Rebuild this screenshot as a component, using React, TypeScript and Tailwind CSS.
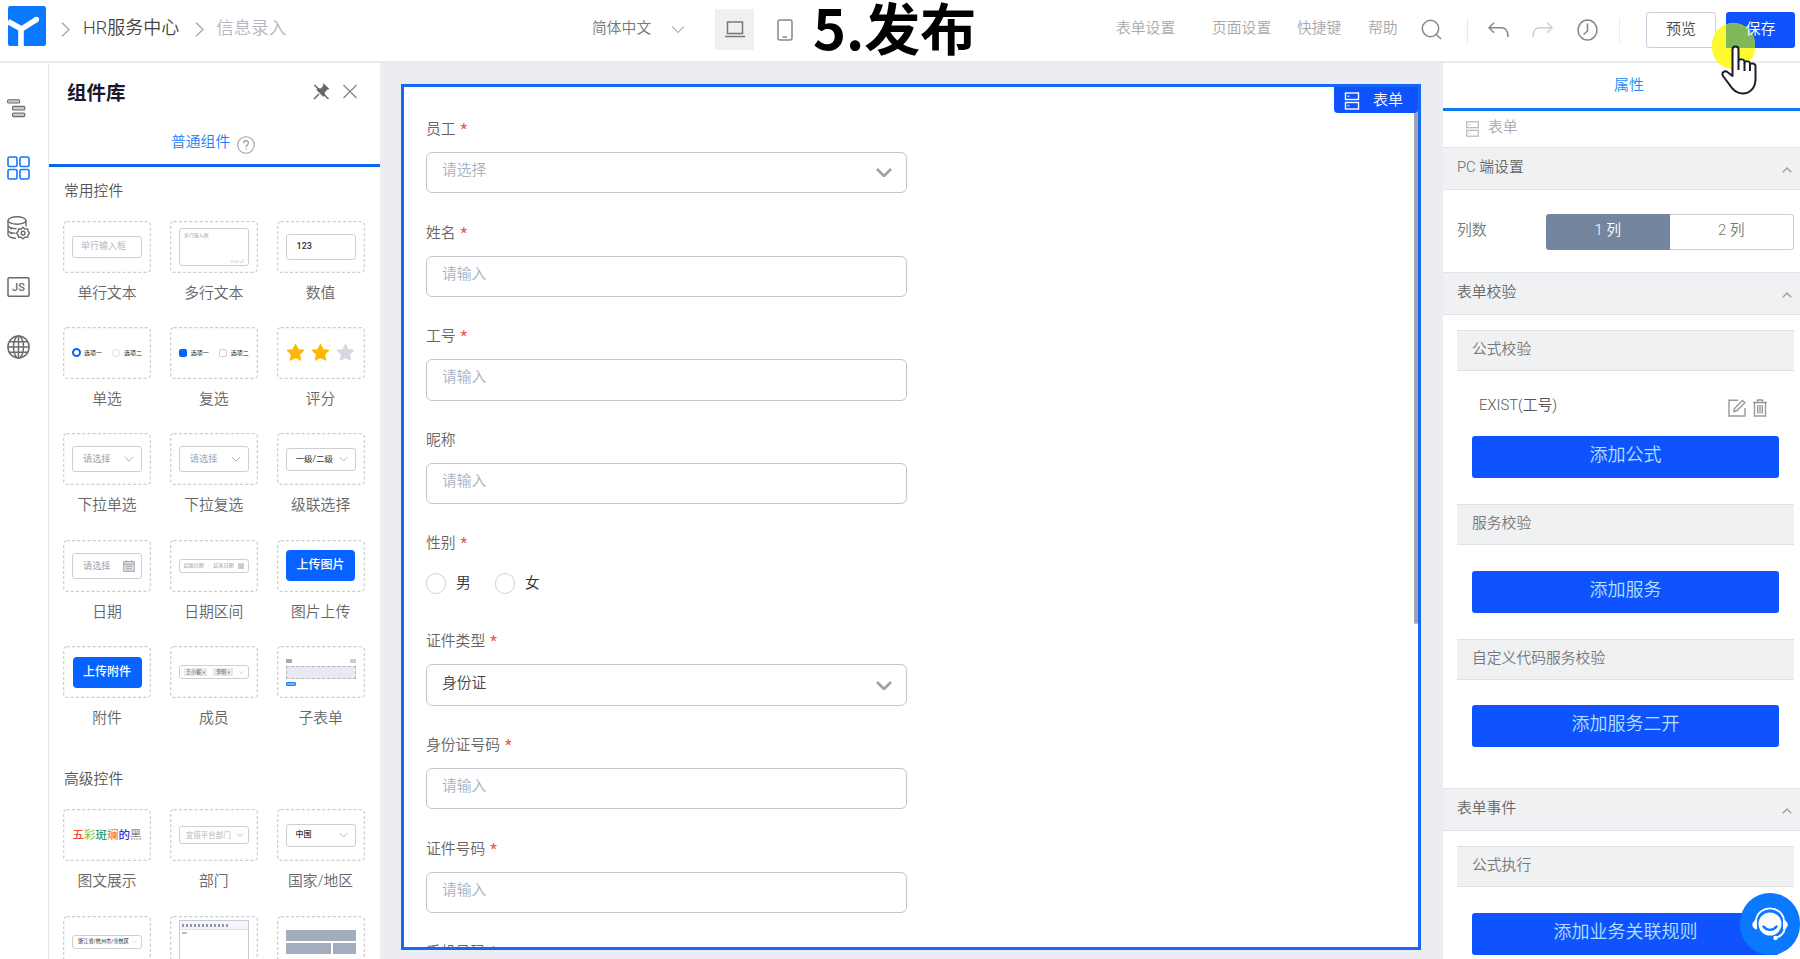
import React from "react";

type Kids = { children?: React.ReactNode };

const Down = ({ className, w = 1.6 }: { className: string; w?: number }) => (
  <svg className={className} viewBox="0 0 16 9" fill="none" stroke="currentColor" strokeWidth={w}>
    <path d="M1 1l7 7 7-7" />
  </svg>
);

const Right = () => (
  <svg className="h-[15px] w-[9px] text-[#a6a6a6]" viewBox="0 0 9 15" fill="none" stroke="currentColor" strokeWidth="1.3">
    <path d="M1 .8l7 6.7-7 6.7" />
  </svg>
);

const FormIcon = ({ className }: { className: string }) => (
  <svg className={className} viewBox="0 0 16 20" fill="none" stroke="currentColor" strokeWidth="1.4">
    <rect x="1.5" y="2" width="13" height="6.5" />
    <rect x="1.5" y="11.5" width="13" height="6.5" />
    <path d="M3.5 5.2h2M3.5 14.7h2" strokeWidth="1" />
  </svg>
);

function Header() {
  return (
    <header className="flex h-[63px] shrink-0 items-start border-b-2 border-[#ebebef] bg-white">
      <div className="flex h-[48px] w-[592px] items-center pl-2">
        <svg className="mt-1 h-[40px] w-[38px]" viewBox="0 0 38 40">
          <rect width="38" height="40" rx="2.5" fill="#0a78ff" />
          <path d="M0 15.5l13.5 7.5L28.5 13.5M13 22v18" stroke="#fff" strokeWidth="5.6" fill="none" />
          <circle cx="28.3" cy="13.6" r="2.8" fill="#fff" />
        </svg>
        <div className="mt-[10px] ml-[15px]"><Right /></div>
        <span className="mt-[7px] ml-[13px] text-[18px] leading-6 text-[#444]">HR服务中心</span>
        <div className="mt-[10px] ml-4"><Right /></div>
        <span className="mt-[7px] ml-[12px] text-[17.5px] leading-6 text-[#b3b6c2]">信息录入</span>
      </div>
      <div className="flex w-[524px] items-start">
        <span className="mt-4 w-[59px] text-[14.8px] leading-6 whitespace-nowrap text-[#777]">简体中文</span>
        <Down className="mt-[25px] ml-5 h-[9px] w-[14px] text-[#aaa]" w={1.2} />
        <div className="mt-[9px] ml-[30px] flex h-[41px] w-[39px] items-center justify-center bg-[#f0f0f0]">
          <svg className="h-[17px] w-[20px]" viewBox="0 0 20 17" fill="none" stroke="#777" strokeWidth="1.5">
            <path d="M2.5 1h15v11.5h-15zM0 15.5h20" />
          </svg>
        </div>
        <svg className="mt-[19px] ml-[23px] h-[22px] w-[16px]" viewBox="0 0 16 22" fill="none" stroke="#888" strokeWidth="1.5">
          <rect x="1" y="1" width="14" height="20" rx="2" />
          <path d="M5.5 18h4.5" />
        </svg>
        <span className="-mt-[4px] ml-[20px] text-[56px] leading-[60px] font-bold whitespace-nowrap text-black [font-family:'Noto_Sans_CJK_SC',sans-serif]">5.发布</span>
      </div>
      <nav className="flex items-start text-[14.8px] leading-6 whitespace-nowrap text-[#a9a9a9]">
        <span className="mt-4 w-[96px]">表单设置</span>
        <span className="mt-4 w-[85px]">页面设置</span>
        <span className="mt-4 w-[71px]">快捷键</span>
        <span className="mt-4 w-[53px]">帮助</span>
        <svg className="mt-[19px] h-[21px] w-[21px]" viewBox="0 0 21 21" fill="none" stroke="#888" strokeWidth="1.5">
          <circle cx="9.5" cy="9.5" r="8.2" />
          <path d="M15.3 15.5l4.7 4.5" />
        </svg>
        <div className="mt-[18px] ml-[25px] h-[26px] w-px bg-[#e8e8e8]" />
        <svg className="mt-[22px] ml-[20px] h-[16px] w-[21px]" viewBox="0 0 21 16" fill="none" stroke="#888" strokeWidth="1.5">
          <path d="M6 .8L1 5.8l5 5M1 5.8h12c4.500 0 7 3 7 9.200" />
        </svg>
        <svg className="mt-[22px] ml-[23px] h-[16px] w-[21px]" viewBox="0 0 21 16" fill="none" stroke="#cfcfcf" strokeWidth="1.5">
          <path d="M15 .8l5 5-5 5M20 5.800H8C3.500 5.800 1 8.800 1 15" />
        </svg>
        <svg className="mt-[19px] ml-[24px] h-[22px] w-[21px]" viewBox="0 0 21 22" fill="none" stroke="#888" strokeWidth="1.6">
          <ellipse cx="10.500" cy="11" rx="9.500" ry="10" />
          <path d="M10.500 4.500v7.500l-4 3.500" />
        </svg>
        <div className="mt-[18px] ml-[21px] h-[26px] w-px bg-[#ececec]" />
        <div className="mt-[12px] ml-[26px] flex h-[36px] w-[70px] justify-center rounded-[3px] border border-[#cfcbdc] pt-1 text-[15px] text-[#4a4a4a]">预览</div>
        <div className="relative mt-[12px] ml-[10px] flex h-[36px] w-[69px] justify-center rounded-[3px] bg-[#0f53ff] pt-[5px] text-[15px] text-white">
          <div className="absolute top-[11px] -left-[14px] h-[46px] w-[43px] overflow-hidden rounded-full bg-[#fff930]">
            <div className="ml-[14px] h-[25px] bg-[#7fb75a]" />
          </div>
          <span className="relative">保存</span>
        </div>
      </nav>
    </header>
  );
}

function Rail() {
  return (
    <aside className="flex w-[49px] shrink-0 flex-col border-r border-[#e9e9ec] bg-white pl-[7px] text-[#6b6b6b]">
      <svg className="mt-[36px] h-[19px] w-[19px]" viewBox="0 0 19 19" fill="#c9c9c9" stroke="currentColor" strokeWidth="1.1">
        <rect x=".6" y=".8" width="12" height="3.200" rx="1" />
        <rect x="5.500" y="7.400" width="12.300" height="3.600" rx="1" />
        <rect x="5.500" y="14" width="12.300" height="3.600" rx="1" />
      </svg>
      <svg className="mt-[38px] h-[24px] w-[23px]" viewBox="0 0 23 24" fill="none" stroke="#1677ff" strokeWidth="1.600">
        <rect x="1" y="1" width="9" height="9.500" rx="1.500" />
        <rect x="13" y="1" width="9" height="9.500" rx="1.500" />
        <rect x="1" y="13.500" width="9" height="9.500" rx="1.500" />
        <rect x="13" y="13.500" width="9" height="9.500" rx="1.500" />
      </svg>
      <svg className="mt-[36px] h-[24px] w-[23px]" viewBox="0 0 23 24" fill="none" stroke="currentColor" strokeWidth="1.400">
        <ellipse cx="10" cy="4.500" rx="9" ry="3.700" />
        <path d="M1 4.500v14c0 2 3.500 3.700 8 3.900M19 4.500v6M1 9.200c0 1.800 3.500 3.400 8.500 3.500M1 13.800c0 1.800 3 3.400 7.500 3.600M4 12v1.500M4 16.800v1.500" />
        <path d="M16 11.300l2 1.800 2.700-.2.500 2.500 1.300 1.800-1.400 2-.5 2.200-2.600-.1-2 1.600-1.900-1.700-2.500 0-.6-2.200-1.300-2 1.400-1.800.5-2.300 2.600.1z" />
        <circle cx="16.100" cy="17.100" r="1.900" />
      </svg>
      <svg className="mt-[37px] h-[20px] w-[23px]" viewBox="0 0 23 20" fill="none" stroke="currentColor" strokeWidth="1.500">
        <rect x="1" y=".8" width="21" height="18.400" rx="1" />
        <text x="11.500" y="14" textAnchor="middle" fontSize="11" fontFamily="Roboto" fill="currentColor" stroke="none" fontWeight="500">JS</text>
      </svg>
      <svg className="mt-[38px] h-[24px] w-[23px]" viewBox="0 0 23 24" fill="none" stroke="currentColor" strokeWidth="1.500">
        <ellipse cx="11.500" cy="12" rx="10.600" ry="11" />
        <ellipse cx="11.500" cy="12" rx="5" ry="11" />
        <path d="M11.500 1v22M1 12h21M2.500 6.700h18M2.500 17.300h18" />
      </svg>
    </aside>
  );
}

const Box = ({ h, children }: Kids & { h: string }) => (
  <div className={"flex w-[70px] items-center rounded-[3px] border border-[#cfcfd2] " + h}>{children}</div>
);

const Star = ({ color }: { color: string }) => (
  <svg className="h-[19px] w-[19px]" viewBox="0 0 24 24" fill={color} stroke={color} strokeWidth="1.500" strokeLinejoin="round">
    <path d="M12 1.800l3.200 6.600 7.100 1-5.200 5 1.300 7.200L12 18.200l-6.400 3.400 1.300-7.200-5.200-5 7.100-1z" />
  </svg>
);

const Cal = ({ className }: { className: string }) => (
  <svg className={className} viewBox="0 0 12 12" fill="#dcdde2" stroke="#a8abb5" strokeWidth="1">
    <path d="M.6 1.600h10.800v9.800H.6zM.6 4.300h10.800M3.400 0v2.500M8.600 0v2.500M3 6.500h6M3 8.800h6" />
  </svg>
);

const Pick = () => (
  <Box h="h-[26px] justify-between pl-[10px] pr-[7px]">
    <span className="text-[9.200px] font-normal text-[#9aa1b0]">请选择</span>
    <Down className="h-[6px] w-[10px] text-[#b0b0b0]" />
  </Box>
);

const Upload = ({ children }: Kids) => (
  <div className="flex h-[31px] w-[69px] items-center justify-center rounded-[4px] bg-[#0763ff] pb-px text-[12px] font-medium text-white">{children}</div>
);

const thumbs: [string, React.ReactNode][] = [
  ["单行文本", <Box h="h-[22px] pl-2"><span className="text-[9px] font-normal text-[#b4bac6]">单行输入框</span></Box>],
  ["多行文本",
    <Box h="h-[38px] flex-col justify-between">
      <span className="w-full pt-[3px] pl-1 text-[5px] leading-[7px] font-normal text-[#a5a8b0]">多行输入框</span>
      <span className="w-full pr-1 text-right text-[4px] leading-[7px] text-[#a5a8b0]">0/50 ⊿</span>
    </Box>],
  ["数值", <Box h="h-[26px] pl-[10px]"><span className="text-[9px] font-medium text-[#333]">123</span></Box>],
  ["单选",
    <div className="flex w-[70px] items-center text-[6px] font-normal whitespace-nowrap text-[#222]">
      <i className="h-[9px] w-[9px] shrink-0 rounded-full border-[2.5px] border-[#0763ff]" />
      <span className="ml-[3px] w-[28px]">选项一</span>
      <i className="h-[8px] w-[8px] shrink-0 rounded-full border border-[#ddd]" />
      <span className="ml-1">选项二</span>
    </div>],
  ["复选",
    <div className="flex w-[70px] items-center text-[6px] font-normal whitespace-nowrap text-[#222]">
      <i className="h-[8px] w-[8px] shrink-0 rounded-[2px] bg-[#0763ff]" />
      <span className="ml-1 w-[28px] shrink-0">选项一</span>
      <i className="h-[8px] w-[8px] shrink-0 rounded-[2px] border border-[#d0d0d0]" />
      <span className="ml-1">选项二</span>
    </div>],
  ["评分", <div className="flex gap-[6px]"><Star color="#ffb700" /><Star color="#ffb700" /><Star color="#d4d8e1" /></div>],
  ["下拉单选", <Pick />],
  ["下拉复选", <Pick />],
  ["级联选择",
    <Box h="h-[23px] justify-between pl-[9px] pr-[7px]">
      <span className="text-[8.500px] font-normal whitespace-nowrap text-[#333]">一级/二级</span>
      <Down className="h-[6px] w-[9px] text-[#b0b0b0]" />
    </Box>],
  ["日期",
    <Box h="h-[26px] justify-between pl-[10px] pr-[6px]">
      <span className="text-[9.200px] font-normal text-[#9aa1b0]">请选择</span>
      <Cal className="h-[12px] w-[12px]" />
    </Box>],
  ["日期区间",
    <Box h="h-[14px] justify-between px-1">
      <span className="text-[5px] whitespace-nowrap text-[#8d909a]">起始日期</span>
      <span className="text-[5px] text-[#8d909a]">-</span>
      <span className="text-[5px] whitespace-nowrap text-[#8d909a]">结束日期</span>
      <Cal className="h-[6px] w-[6px]" />
    </Box>],
  ["图片上传", <Upload>上传图片</Upload>],
  ["附件", <Upload>上传附件</Upload>],
  ["成员",
    <Box h="h-[14px] justify-between px-1">
      <span className="bg-[#e9e9ec] px-[2px] text-[5.200px] leading-[8px] whitespace-nowrap text-[#444]">王小妮 ×</span>
      <span className="bg-[#e9e9ec] px-[3px] text-[5.200px] leading-[8px] whitespace-nowrap text-[#444]">李明 ×</span>
      <Down className="h-[3px] w-[5px] text-[#aaa]" />
    </Box>],
  ["子表单",
    <div className="flex w-[70px] flex-col gap-[3px]">
      <div className="flex justify-between"><i className="h-[4px] w-[6px] bg-[#a7a9ae]" /><i className="h-[4px] w-[6px] bg-[#ccc]" /></div>
      <div className="h-[13px] border border-dashed border-[#b2b4bb] bg-[#e9eaef]" />
      <i className="h-[4px] w-[10px] rounded-[1px] border border-[#2f83e0] bg-[#6ab3f5]" />
    </div>],
  ["图文展示",
    <div className="flex text-[11.500px] font-medium">
      <span className="text-[#f44a3e]">五</span><span className="text-[#9ccb3d]">彩</span><span className="text-[#1f9e78]">斑</span>
      <span className="text-[#fa7f2d]">斓</span><span className="text-[#2d33dd]">的</span><span className="font-normal text-[#888]">黑</span>
    </div>],
  ["部门",
    <Box h="h-[18px] justify-between pl-[6px] pr-[5px]">
      <span className="text-[7.500px] font-normal whitespace-nowrap text-[#b4b7bf]">宜搭平台部门</span>
      <Down className="h-[4px] w-[6px] text-[#999]" w={2} />
    </Box>],
  ["国家/地区",
    <Box h="h-[23px] justify-between pl-[9px] pr-[7px]">
      <span className="text-[8px] font-medium text-[#333]">中国</span>
      <Down className="h-[6px] w-[9px] text-[#b0b0b0]" />
    </Box>],
  ["地址",
    <Box h="h-[14px] justify-between pl-[5px] pr-1">
      <span className="text-[5.200px] font-normal whitespace-nowrap text-[#222]">浙江省/杭州市/余杭区</span>
      <Down className="h-[3px] w-[5px] text-[#aaa]" />
    </Box>],
  ["富文本",
    <div className="flex h-[43px] w-[70px] flex-col border border-[#c9ccd6]">
      <div className="flex h-[9px] items-center gap-[2px] border-b border-[#e0e2e8] bg-[#f4f5f8] pl-[2px]">
        {Array.from({ length: 12 }, (_, i) => <i key={i} className="h-[3px] w-[2px] bg-[#9298ab]" />)}
      </div>
      <i className="mt-[2px] ml-[2px] h-[2px] w-[5px] bg-[#b6bccb]" />
    </div>],
  ["布局容器",
    <div className="flex w-[70px] flex-col gap-[2px]">
      <div className="h-[11px] bg-[#a3adbe]" />
      <div className="flex gap-[2px]"><i className="h-[11px] w-[45px] bg-[#a3adbe]" /><i className="h-[11px] flex-1 bg-[#a3adbe]" /></div>
    </div>],
];

const Card = ({ item }: { item: [string, React.ReactNode] }) => (
  <div className="flex h-[106.400px] flex-col items-center">
    <div className="flex h-[52px] w-[88px] shrink-0 items-center justify-center">
      <svg className="absolute h-[52px] w-[88px]" fill="none" stroke="#cccccf" strokeWidth="1.200" strokeDasharray="3 2.200">
        <rect x=".7" y=".7" width="86.600" height="50.600" rx="3" />
      </svg>
      {item[1]}
    </div>
    <span className="mt-[8px] text-[14.800px] leading-6 whitespace-nowrap text-[#666]">{item[0]}</span>
  </div>
);

function Library() {
  return (
    <section className="flex w-[331px] shrink-0 flex-col overflow-hidden bg-white">
      <div className="flex h-[60px] shrink-0 items-start">
        <h2 className="mt-[17px] ml-[18px] w-[246px] text-[19.500px] leading-7 font-bold text-[#17192b]">组件库</h2>
        <svg className="mt-[20px] h-[17px] w-[17px]" viewBox="0 0 17 17" fill="#666" stroke="#666">
          <path d="M10.500.5l5.500 5.500-1.500.3-3 3 .2 3.200-1.500 1-6.500-6.500 1-1.500 3.200.200 2.600-3z" strokeWidth=".5" />
          <path d="M1 16l5-5M1.500 2l14 14" strokeWidth="1.500" />
        </svg>
        <svg className="mt-[21px] ml-[13px] h-[15px] w-[14px]" viewBox="0 0 14 15" stroke="#888" strokeWidth="1.300">
          <path d="M.5 1l13 13M13.500 1l-13 13" />
        </svg>
      </div>
      <div className="flex h-[43.500px] shrink-0 items-start border-b-[3px] border-[#0a66ee] pl-[122px]">
        <span className="mt-[7px] text-[14.800px] leading-6 text-[#1b80f5]">普通组件</span>
        <svg className="mt-[13px] ml-[7px] h-[18px] w-[18px]" viewBox="0 0 18 18" fill="none" stroke="#a0a0a0" strokeWidth="1.100">
          <circle cx="9" cy="9" r="8.300" />
          <path d="M6.700 7.200c0-3.200 4.700-3.200 4.700-.3 0 1.700-2.300 1.900-2.300 4M9.100 12.400v1.400" strokeWidth="1.300" />
        </svg>
      </div>
      <h3 className="mt-[12px] ml-[15px] text-[14.800px] leading-6 text-[#555]">常用控件</h3>
      <div className="mt-[18px] grid w-[302px] shrink-0 grid-cols-[88px_88px_88px] gap-x-[18.800px] pl-[14px]">
        {thumbs.slice(0, 15).map((t) => <Card key={t[0]} item={t} />)}
      </div>
      <h3 className="mt-[15px] ml-[15px] text-[14.800px] leading-6 text-[#555]">高级控件</h3>
      <div className="mt-[18px] grid w-[302px] shrink-0 grid-cols-[88px_88px_88px] gap-x-[18.800px] pl-[14px]">
        {thumbs.slice(15).map((t) => <Card key={t[0]} item={t} />)}
      </div>
    </section>
  );
}

const Label = ({ text, required = true }: { text: string; required?: boolean }) => (
  <div className="flex h-[36px] items-start pt-px text-[14.800px] leading-6 text-[#666]">
    {text}
    {required && <span className="ml-[5px] font-medium text-[#f4523d]">*</span>}
  </div>
);

type FieldProps = { label: string; value?: string; select?: boolean; required?: boolean };

const Field = ({ label, value, select, required }: FieldProps) => (
  <div className="h-[103.600px] shrink-0">
    <Label text={label} required={required} />
    <div className="flex h-[41.400px] w-[481px] items-center justify-between rounded-[6px] border border-[#c6c7ca] pr-[14px] pl-[15px]">
      <span className={value ? "pb-[5px] text-[14.800px] leading-6 text-[#444]" : "pb-[5px] text-[14.800px] leading-6 text-[#a8b2c3]"}>
        {value ?? (select ? "请选择" : "请输入")}
      </span>
      {select && <Down className="h-[9px] w-[16px] text-[#a0a0a2]" w={2.8} />}
    </div>
  </div>
);

const Radio = ({ text }: { text: string }) => (
  <div className="flex w-[69px] items-start">
    <i className="h-[21px] w-[20px] rounded-full border border-[#d2d2d4]" />
    <span className="-mt-[2px] ml-[10px] text-[14.800px] leading-6 text-[#333]">{text}</span>
  </div>
);

function Canvas() {
  return (
    <main className="flex flex-1 bg-[#ecedf2] pt-[21px] pr-[22px] pl-[21px]">
      <div className="relative flex h-[866px] w-full flex-col overflow-hidden border-[3px] border-[#1668f5] bg-white pt-[29px] pl-[22px]">
        <Field label="员工" select />
        <Field label="姓名" />
        <Field label="工号" />
        <Field label="昵称" required={false} />
        <div className="h-[98px] shrink-0">
          <Label text="性别" />
          <div className="mt-[7px] flex"><Radio text="男" /><Radio text="女" /></div>
        </div>
        <Field label="证件类型" value="身份证" select />
        <Field label="身份证号码" />
        <Field label="证件号码" />
        <Field label="手机号码" />
        <div className="absolute top-0 right-0 h-[537px] w-[4px] rounded-b-sm bg-[#9ea5b1]" />
        <div className="absolute top-0 right-0 flex h-[26px] w-[84px] items-center rounded-b-[4px] bg-[#0f53ff] pl-[10px] text-white">
          <FormIcon className="mt-px h-[20px] w-[16px]" />
          <span className="ml-[13px] pb-px text-[15px] leading-6">表单</span>
        </div>
      </div>
    </main>
  );
}

const Section = ({ children }: Kids) => (
  <div className="flex h-[42.500px] shrink-0 items-start justify-between border-y border-[#e2e3e6] bg-[#f0f1f3] pr-[8px] pl-[14px]">
    <span className="mt-[7px] text-[14.800px] leading-6 text-[#666]">{children}</span>
    <svg className="mt-[19px] h-[6px] w-[10px]" viewBox="0 0 10 6" fill="none" stroke="#a0a0a0" strokeWidth="1.400"><path d="M.8 5.200L5 1l4.200 4.200" /></svg>
  </div>
);

const Sub = ({ children }: Kids) => (
  <div className="mr-[6px] ml-[14px] h-[41px] shrink-0 border-y border-[#dfe0e3] bg-[#f0f1f3] pt-[6px] pl-[15px] text-[14.800px] leading-6 text-[#777]">{children}</div>
);

const Action = ({ children }: Kids) => (
  <div className="mr-[21px] ml-[29px] flex h-[42px] shrink-0 items-start justify-center rounded-[3px] bg-[#0f53ff] pt-[7px] text-[18px] leading-6 text-[#b4e0ff]">{children}</div>
);

function Props() {
  return (
    <section className="flex w-[357px] shrink-0 flex-col overflow-hidden bg-white">
      <div className="flex h-[48px] shrink-0 justify-center border-b-[3px] border-[#0a7af5] pt-[10px] pl-[15px] text-[15px] leading-6 text-[#1b8cf8]">属性</div>
      <div className="flex h-[36px] shrink-0 items-start pl-[21px]">
        <FormIcon className="mt-[9px] h-[18px] w-[17px] text-[#bbbcc2]" />
        <span className="mt-[4px] ml-[7px] text-[14.800px] leading-6 text-[#a5a8b4]">表单</span>
      </div>
      <Section>PC 端设置</Section>
      <div className="flex h-[82.500px] shrink-0 items-start pl-[14px] text-[14.800px] leading-6 text-[#777]">
        <span className="mt-[28px] w-[89px]">列数</span>
        <div className="mt-[24px] flex h-[36px] w-[248px]">
          <div className="flex-1 rounded-l-[3px] bg-[#74869e] pt-[4px] text-center text-white">1 列</div>
          <div className="flex-1 rounded-r-[3px] border border-l-0 border-[#cfcfd3] pt-[3px] text-center">2 列</div>
        </div>
      </div>
      <Section>表单校验</Section>
      <div className="h-[15px] shrink-0" />
      <Sub>公式校验</Sub>
      <div className="flex h-[65.500px] shrink-0 items-start pl-[36px]">
        <span className="mt-[22px] w-[249px] text-[14.800px] leading-6 text-[#555]">EXIST(工号)</span>
        <svg className="mt-[28px] h-[18px] w-[18px]" viewBox="0 0 18 18" fill="none" stroke="#999" strokeWidth="1.400">
          <path d="M10 1.200H1v15.800h16V9M6.500 9.500l8-8 2.300 2.300-8 8-3 .7z" />
        </svg>
        <svg className="mt-[28px] ml-[7px] h-[18px] w-[14px]" viewBox="0 0 14 18" fill="none" stroke="#999" strokeWidth="1.400">
          <path d="M0 3.500h14M4.500 3V1h5v2M1.500 3.500v13.500h11V3.500M4.700 6v8.500M7 6v8.500M9.300 6v8.500" />
        </svg>
      </div>
      <Action>添加公式</Action>
      <div className="h-[26px] shrink-0" />
      <Sub>服务校验</Sub>
      <div className="h-[25.500px] shrink-0" />
      <Action>添加服务</Action>
      <div className="h-[26px] shrink-0" />
      <Sub>自定义代码服务校验</Sub>
      <div className="h-[25.500px] shrink-0" />
      <Action>添加服务二开</Action>
      <div className="h-[41px] shrink-0" />
      <Section>表单事件</Section>
      <div className="h-[15px] shrink-0" />
      <Sub>公式执行</Sub>
      <div className="h-[26px] shrink-0" />
      <Action>添加业务关联规则</Action>
    </section>
  );
}

export default function App() {
  return (
    <div className="relative flex h-[959px] w-[1800px] flex-col overflow-hidden bg-white font-[350] [font-family:Roboto,'Noto_Sans_CJK_SC',sans-serif]">
      <Header />
      <div className="flex min-h-0 flex-1">
        <Rail />
        <Library />
        <Canvas />
        <Props />
      </div>
      <svg className="absolute top-[45px] left-[1721px] h-[50px] w-[37px]" viewBox="0 0 37 50" fill="#fff" stroke="#1d1d2b" strokeWidth="2" strokeLinejoin="round">
        <path d="M11.500 31V4.500c0-4 6-4 6 0V16c0-2.500 6-2 6 .5V18c0-2.500 5.500-2 5.500.5V20c0-2.500 5.500-2 5.500 1V34c0 9-5.500 14.500-13 14.500-7 0-10.500-4.500-13.500-9.500L2 31c-2-4 2-6 5-3.500z" />
        <path d="M17.500 16v9M23.500 18v8M29 20v6" fill="none" />
      </svg>
      <div className="absolute top-[893px] left-[1740px] flex h-[62px] w-[60px] items-center justify-center rounded-full bg-[#0a78ff]">
        <svg className="h-[34px] w-[36px]" viewBox="0 0 36 34" fill="none" stroke="#fff">
          <circle cx="18" cy="17" r="11.500" fill="#fff" stroke="none" />
          <path d="M4 13C7-2.500 29-2.500 32 13M33 21c-1 5-4 8.500-9.500 10" strokeWidth="1.800" />
          <path d="M4.500 13v9C-.5 21-.5 14.500 4.500 13zM31.500 13v9c5-1 5-7.500 0-9z" fill="#fff" strokeWidth="1" />
          <path d="M11.500 19.500c3.500 4.500 9.500 4.500 13 0" stroke="#0a78ff" strokeWidth="2.400" strokeLinecap="round" />
          <circle cx="23.500" cy="31" r="2.200" fill="#fff" stroke="none" />
        </svg>
      </div>
    </div>
  );
}
